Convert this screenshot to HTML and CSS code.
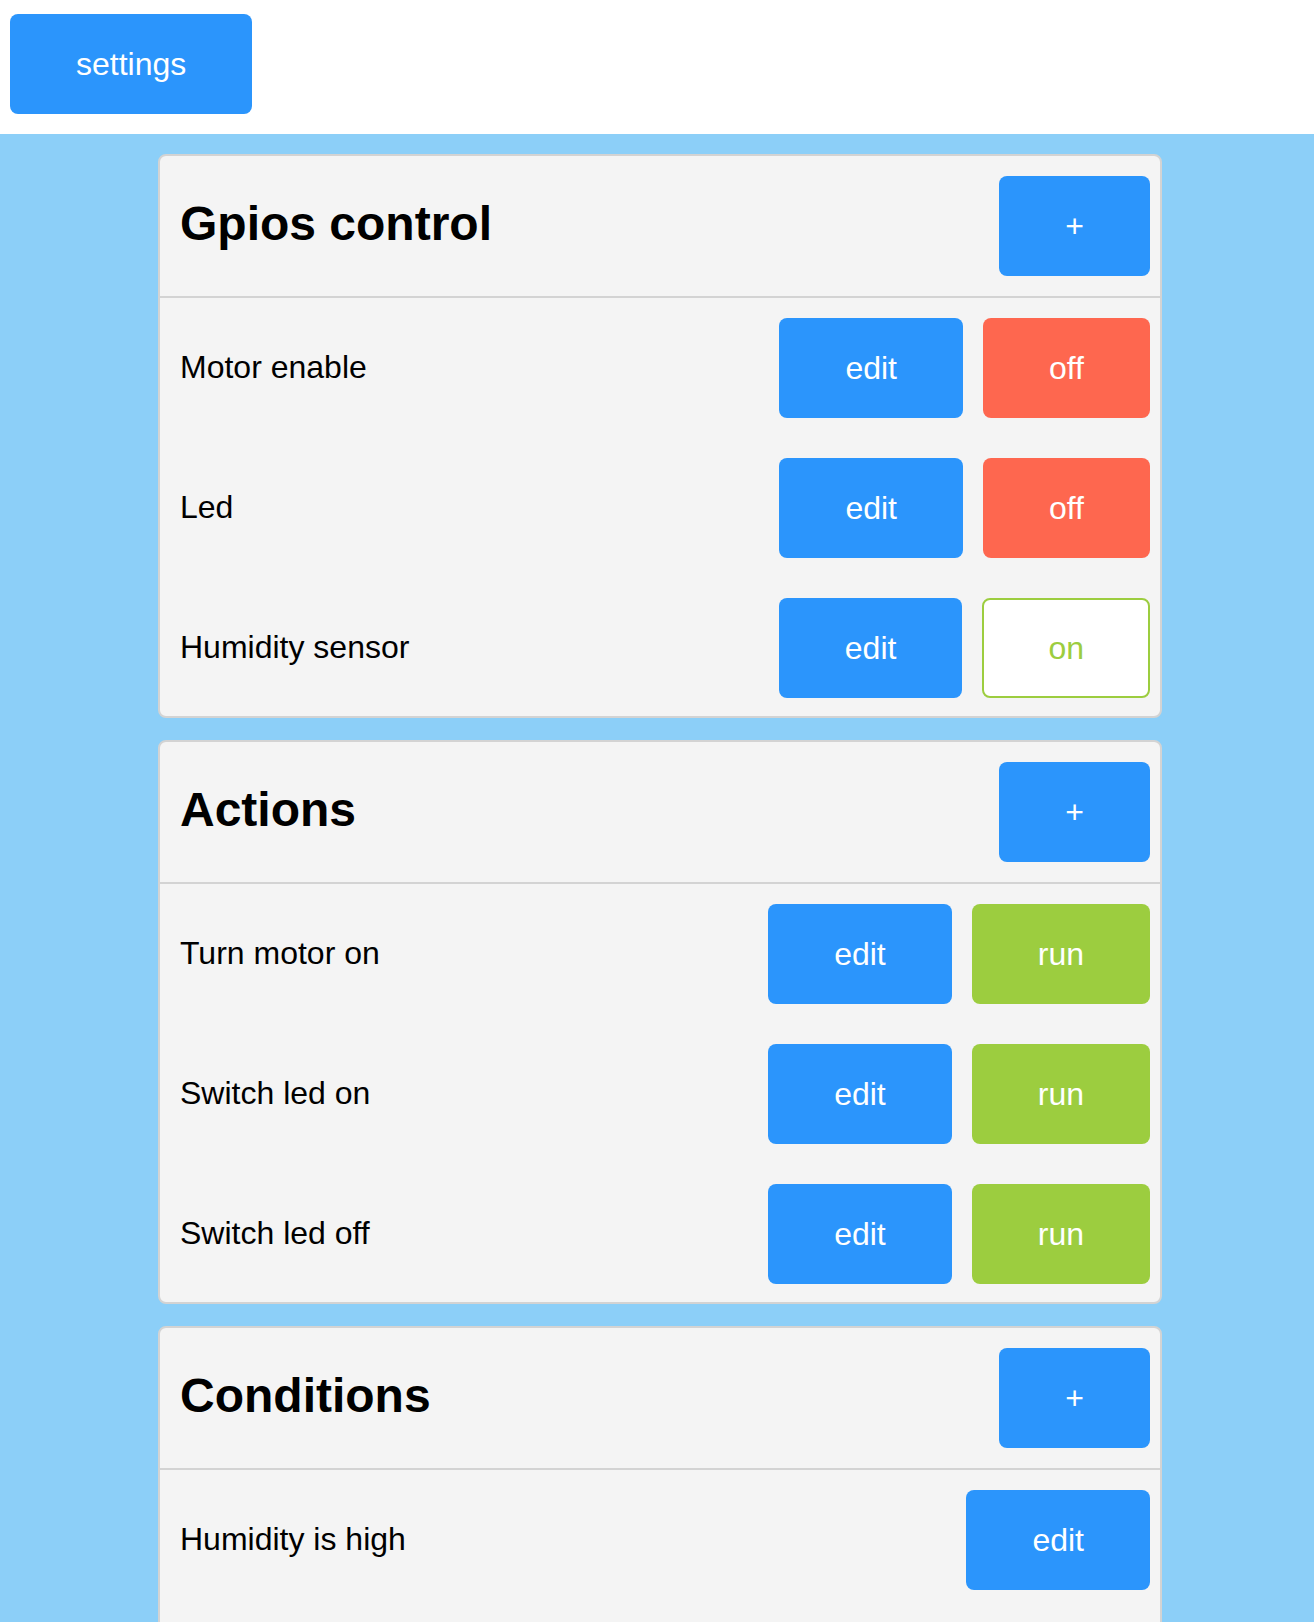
FILE: index.html
```html
<!DOCTYPE html>
<html lang="en">
<head>
<meta charset="utf-8">
<title>Gpios control</title>
<link rel="stylesheet" href="styles.css">
</head>
<body>
<header class="topbar">
  <button class="btn btn-blue">settings</button>
</header>
<main class="content">
  <section class="card">
    <div class="card-head">
      <h1 class="card-title">Gpios control</h1>
      <button class="btn btn-blue">+</button>
    </div>
    <div class="card-body">
      <div class="row">
        <span class="row-label">Motor enable</span>
        <div class="row-actions">
          <button class="btn btn-blue">edit</button>
          <button class="btn btn-red">off</button>
        </div>
      </div>
      <div class="row">
        <span class="row-label">Led</span>
        <div class="row-actions">
          <button class="btn btn-blue">edit</button>
          <button class="btn btn-red">off</button>
        </div>
      </div>
      <div class="row">
        <span class="row-label">Humidity sensor</span>
        <div class="row-actions">
          <button class="btn btn-blue">edit</button>
          <button class="btn btn-on">on</button>
        </div>
      </div>
    </div>
  </section>
  <section class="card">
    <div class="card-head">
      <h1 class="card-title">Actions</h1>
      <button class="btn btn-blue">+</button>
    </div>
    <div class="card-body">
      <div class="row">
        <span class="row-label">Turn motor on</span>
        <div class="row-actions">
          <button class="btn btn-blue">edit</button>
          <button class="btn btn-green">run</button>
        </div>
      </div>
      <div class="row">
        <span class="row-label">Switch led on</span>
        <div class="row-actions">
          <button class="btn btn-blue">edit</button>
          <button class="btn btn-green">run</button>
        </div>
      </div>
      <div class="row">
        <span class="row-label">Switch led off</span>
        <div class="row-actions">
          <button class="btn btn-blue">edit</button>
          <button class="btn btn-green">run</button>
        </div>
      </div>
    </div>
  </section>
  <section class="card card-tall">
    <div class="card-head">
      <h1 class="card-title">Conditions</h1>
      <button class="btn btn-blue">+</button>
    </div>
    <div class="card-body">
      <div class="row">
        <span class="row-label">Humidity is high</span>
        <div class="row-actions">
          <button class="btn btn-blue">edit</button>
        </div>
      </div>
    </div>
  </section>
</main>
</body>
</html>
```
FILE: styles.css
```css
html, body {
  margin: 0;
  padding: 0;
}
body {
  font-family: "Liberation Sans", Arial, Helvetica, sans-serif;
  background: #8ccff8;
  color: #000;
}
.topbar {
  background: #fff;
  padding: 14px 10px 20px;
  display: flex;
}
.btn {
  font-family: inherit;
  font-size: 32px;
  height: 100px;
  padding: 0 66px;
  border: none;
  border-radius: 8px;
  color: #fff;
  cursor: pointer;
  line-height: 1;
  box-sizing: border-box;
}
.btn-blue { background: #2b95fc; }
.btn-red { background: #fe674f; }
.btn-green { background: #9ccd3f; }
.btn-on {
  background: #fff;
  color: #9ccd3f;
  border: 2px solid #9ccd3f;
  padding: 0 64px;
}
.content {
  display: flex;
  flex-direction: column;
  gap: 22px;
  padding: 20px 0 20px 158px;
}
.card {
  width: 1004px;
  box-sizing: border-box;
  background: #f4f4f4;
  border: 2px solid #d3d3d3;
  border-radius: 8px;
}
.card-tall {
  min-height: 340px;
}
.card-head {
  display: flex;
  align-items: center;
  justify-content: space-between;
  padding: 20px 10px 20px 20px;
  border-bottom: 2px solid #d3d3d3;
}
.card-title {
  margin: 0 0 5px;
  font-size: 48px;
  font-weight: bold;
}
.card-body {
  display: flex;
  flex-direction: column;
  gap: 40px;
  padding: 20px 10px 18px 20px;
}
.row {
  display: flex;
  align-items: center;
  justify-content: space-between;
}
.row-label {
  font-size: 32px;
  padding-bottom: 2px;
}
.row-actions {
  display: flex;
  gap: 20px;
}
```
